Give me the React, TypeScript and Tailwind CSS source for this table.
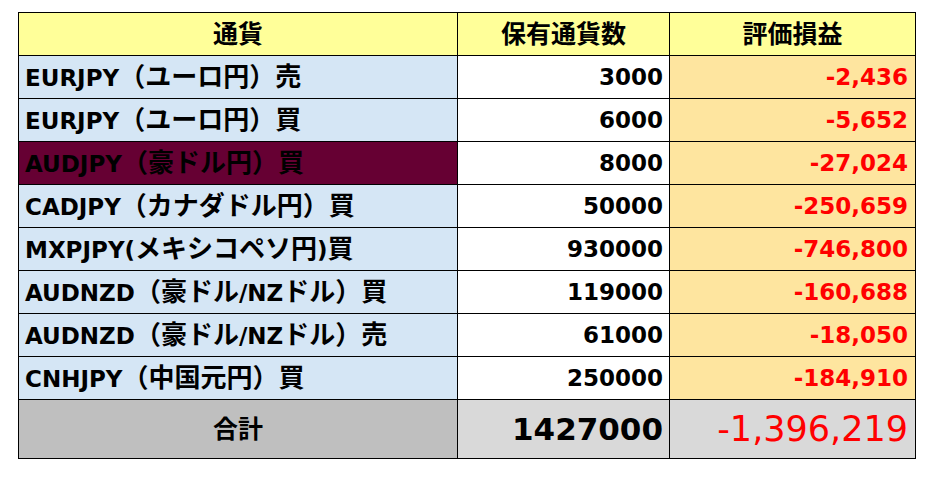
import React from 'react';

const rows = [
    { name: 'EURJPY（ユーロ円）売', qty: '3000', pl: '-2,436' },
    { name: 'EURJPY（ユーロ円）買', qty: '6000', pl: '-5,652' },
    { name: 'AUDJPY（豪ドル円）買', qty: '8000', pl: '-27,024', dark: true },
    { name: 'CADJPY（カナダドル円）買', qty: '50000', pl: '-250,659' },
    { name: 'MXPJPY(メキシコペソ円)買', qty: '930000', pl: '-746,800' },
    { name: 'AUDNZD（豪ドル/NZドル）買', qty: '119000', pl: '-160,688' },
    { name: 'AUDNZD（豪ドル/NZドル）売', qty: '61000', pl: '-18,050' },
    { name: 'CNHJPY（中国元円）買', qty: '250000', pl: '-184,910' },
];

// Japanese glyphs sit a bit larger than the latin ones in the sheet
function Label({ text }: { text: string }) {
    const parts = text.split(/([\u3000-\u9fff\uff00-\uffef]+)/);
    return (
        <>
            {parts.map((p, i) =>
                /[\u3000-\u9fff\uff00-\uffef]/.test(p) ? (
                    <span key={i} className="text-[26px]">{p}</span>
                ) : (
                    <span key={i}>{p}</span>
                )
            )}
        </>
    );
}

export default function App() {
    return (
        <main
            className="bg-white w-[951px] h-[487px] pt-[12px] pl-[18px]"
            style={{ fontFamily: '"DejaVu Sans", "Noto Sans CJK JP", sans-serif' }}
        >
            <table className="border-collapse table-fixed w-[897px] text-black font-bold">
                <colgroup>
                    <col className="w-[439px]" />
                    <col className="w-[212px]" />
                    <col className="w-[246px]" />
                </colgroup>
                <thead>
                    {/* header */}
                    <tr className="h-[43px] bg-[#ffff99] text-[25px]">
                        <th className="border border-black text-center font-bold p-0 leading-none">通貨</th>
                        <th className="border border-black text-center font-bold p-0 leading-none">保有通貨数</th>
                        <th className="border border-black text-center font-bold p-0 leading-none">評価損益</th>
                    </tr>
                </thead>
                <tbody>
                    {rows.map((r) => (
                        <tr key={r.name} className="h-[43px] text-[23px]">
                            <td
                                className={
                                    'border border-black pl-[6px] whitespace-nowrap leading-none ' +
                                    (r.dark ? 'bg-[#660033]' : 'bg-[#d5e6f5]')
                                }
                            >
                                <Label text={r.name} />
                            </td>
                            <td className="border border-black bg-white text-right pr-[6px]">{r.qty}</td>
                            <td className="border border-black bg-[#fee59f] text-right pr-[7px] text-[#ff0000]">{r.pl}</td>
                        </tr>
                    ))}
                    {/* total */}
                    <tr className="h-[59px]">
                        <td className="border border-black bg-[#bfbfbf] text-center text-[25px] leading-none">合計</td>
                        <td className="border border-black bg-[#d9d9d9] text-right pr-[6px] text-[31px]">1427000</td>
                        <td className="border border-black bg-[#d9d9d9] text-right pr-[7px] text-[35px] font-normal text-[#ff0000]">
                            -1,396,219
                        </td>
                    </tr>
                </tbody>
            </table>
        </main>
    );
}
